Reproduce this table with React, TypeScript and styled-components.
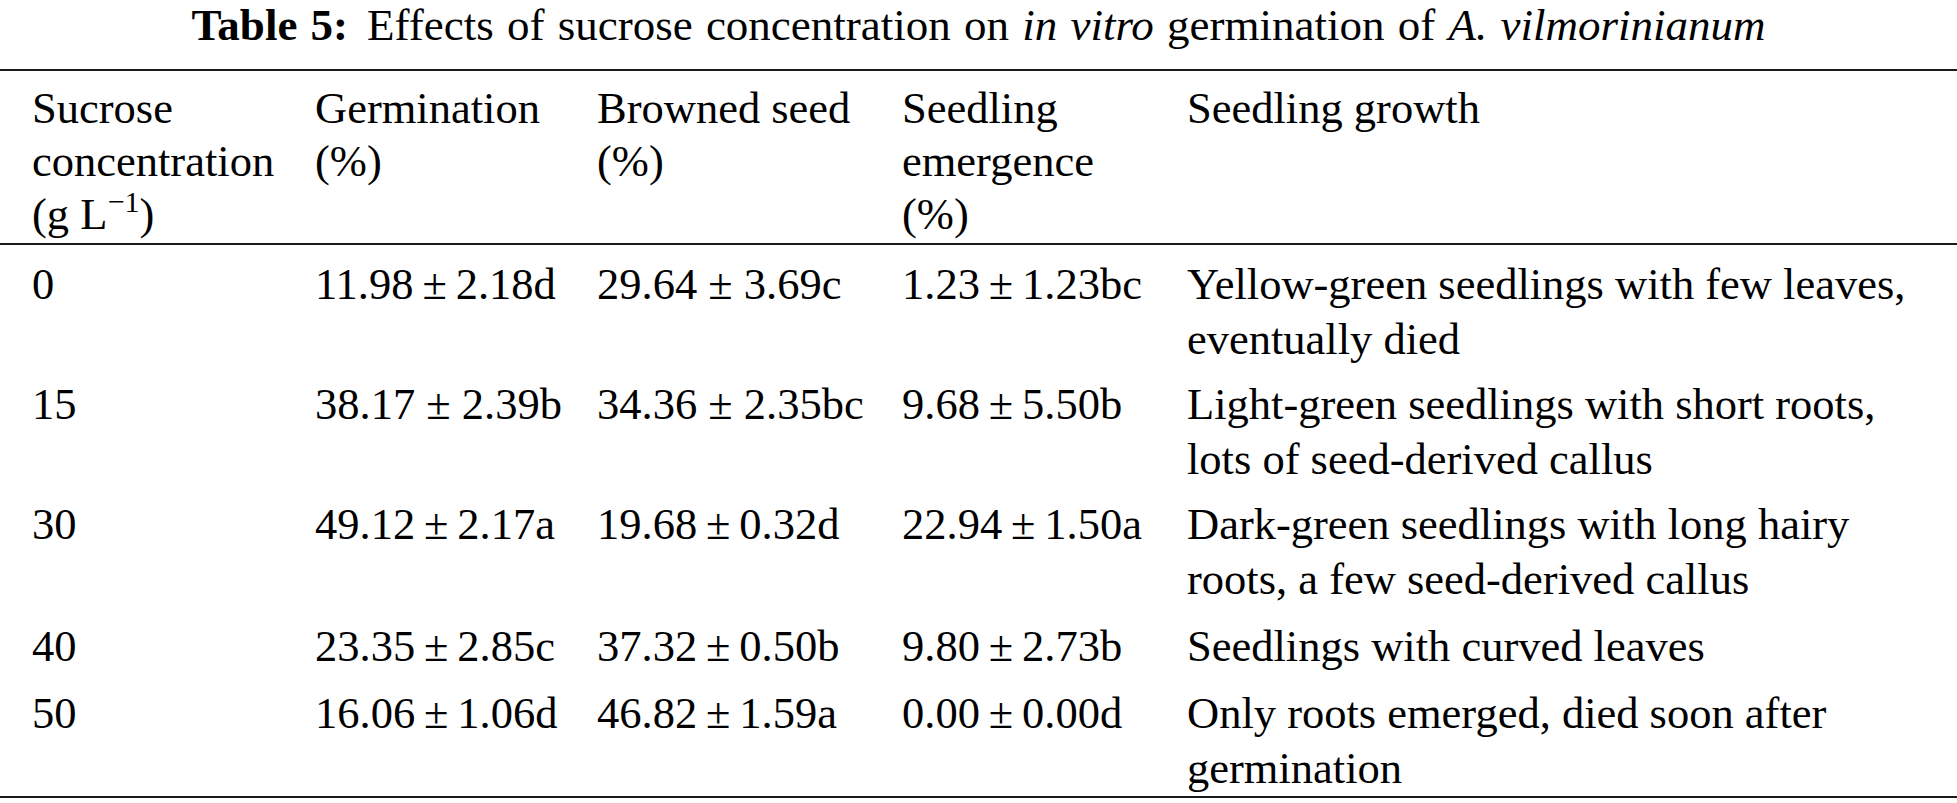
import React from 'react'
import styled, { createGlobalStyle } from 'styled-components'

const GlobalStyle = createGlobalStyle`
  html, body {
    margin: 0;
    padding: 0;
    background: #ffffff;
  }
  body {
    font-family: 'Liberation Serif', 'Times New Roman', serif;
    color: #000000;
  }
`

type Row = {
  sucrose: string
  germination: string
  browned: string
  emergence: string
  growth: string
  gap: number
}

// thin spaces where the source set the ± tight
const t = '\u2009±\u2009'

const rows: Row[] = [
  {
    sucrose: '0',
    germination: `11.98${t}2.18d`,
    browned: '29.64 ± 3.69c',
    emergence: `1.23${t}1.23bc`,
    growth: 'Yellow-green seedlings with few leaves, eventually died',
    gap: 12,
  },
  {
    sucrose: '15',
    germination: '38.17 ± 2.39b',
    browned: '34.36 ± 2.35bc',
    emergence: `9.68${t}5.50b`,
    growth: 'Light-green seedlings with short roots, lots of seed-derived callus',
    gap: 10,
  },
  {
    sucrose: '30',
    germination: `49.12${t}2.17a`,
    browned: `19.68${t}0.32d`,
    emergence: `22.94${t}1.50a`,
    growth: 'Dark-green seedlings with long hairy roots, a few seed-derived callus',
    gap: 10,
  },
  {
    sucrose: '40',
    germination: `23.35${t}2.85c`,
    browned: `37.32${t}0.50b`,
    emergence: `9.80${t}2.73b`,
    growth: 'Seedlings with curved leaves',
    gap: 12,
  },
  {
    sucrose: '50',
    germination: `16.06${t}1.06d`,
    browned: `46.82${t}1.59a`,
    emergence: `0.00${t}0.00d`,
    growth: 'Only roots emerged, died soon after germination',
    gap: 12,
  },
]

export default function App() {
  return (
    <Page>
      <GlobalStyle />
      <Title>
        <Label>Table 5:</Label>
        Effects of sucrose concentration on <i>in vitro</i> germination of{' '}
        <i>A. vilmorinianum</i>
      </Title>
      <Table>
        <colgroup>
          <col style={{ width: 315 }} />
          <col style={{ width: 282 }} />
          <col style={{ width: 305 }} />
          <col style={{ width: 285 }} />
          <col />
        </colgroup>
        <thead>
          <tr>
            <Head>
              Sucrose
              <br />
              concentration
              <br />
              (g L<Sup>−1</Sup>)
            </Head>
            <Head>
              Germination
              <br />
              (%)
            </Head>
            <Head>
              Browned seed
              <br />
              (%)
            </Head>
            <Head>
              Seedling
              <br />
              emergence
              <br />
              (%)
            </Head>
            <Head>Seedling growth</Head>
          </tr>
        </thead>
        <tbody>
          {rows.map((row) => (
            <BodyRow key={row.sucrose} $gap={row.gap}>
              <Cell>{row.sucrose}</Cell>
              <Cell>{row.germination}</Cell>
              <Cell>{row.browned}</Cell>
              <Cell>{row.emergence}</Cell>
              <Cell $wrap>{row.growth}</Cell>
            </BodyRow>
          ))}
        </tbody>
      </Table>
    </Page>
  )
}

const Page = styled.div`
  width: 1957px;
`

const Title = styled.div`
  font-size: 45px;
  line-height: 50px;
  word-spacing: 2px;
  text-align: center;
  padding-bottom: 19px;
  i {
    font-style: italic;
  }
`

const Label = styled.b`
  font-weight: bold;
  margin-right: 19px;
`

const Table = styled.table`
  width: 100%;
  border-collapse: collapse;
  table-layout: fixed;
  font-size: 44.5px;
`

const Head = styled.th`
  text-align: left;
  vertical-align: top;
  font-weight: normal;
  line-height: 53px;
  padding: 11px 0 2px 0;
  border-top: 2px solid #1a1a1a;
  border-bottom: 2px solid #1a1a1a;
  &:first-child {
    padding-left: 32px;
  }
`

const Sup = styled.sup`
  font-size: 0.68em;
  line-height: 0;
  vertical-align: 0.55em;
`

const BodyRow = styled.tr<{ $gap: number }>`
  td {
    padding-top: ${({ $gap }) => $gap}px;
  }
  &:last-child td {
    border-bottom: 2px solid #1a1a1a;
  }
`

const Cell = styled.td<{ $wrap?: boolean }>`
  vertical-align: top;
  line-height: 55px;
  padding: 0;
  white-space: ${({ $wrap }) => ($wrap ? 'normal' : 'nowrap')};
  padding-right: ${({ $wrap }) => ($wrap ? '30px' : '0')};
  &:first-child {
    padding-left: 32px;
  }
`
